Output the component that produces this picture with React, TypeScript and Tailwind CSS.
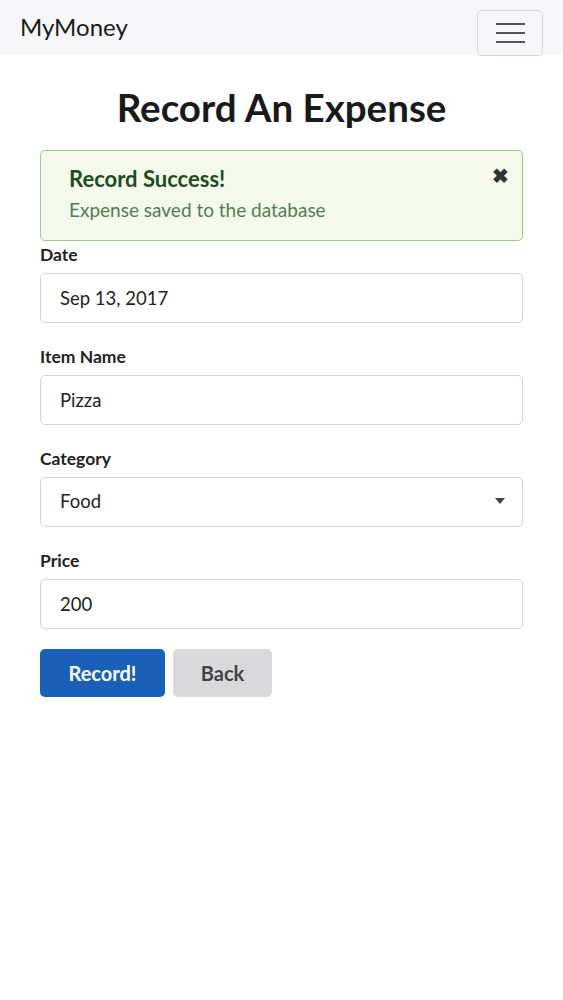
import React from 'react';

const Field: React.FC<{ label: string; children: React.ReactNode }> = ({ label, children }) => (
  <div className="mb-[22px]">
    <label className="block mb-[6px] text-[17.5px] leading-6 font-bold text-[#222]">{label}</label>
    {children}
  </div>
);

const inputCls =
  'w-full h-[50px] pl-[19px] pr-5 rounded-[5px] border border-[#d4d4d6] bg-white text-[18.5px] text-[#222] outline-none';

export default function App() {
  return (
    <div className="min-h-screen bg-white font-['Lato','Open_Sans',sans-serif]">
      {/* Navbar */}
      <nav className="relative h-[54px] bg-[#f6f5f8]">
        <div className="flex items-center h-full pl-5">
          <span className="text-[24px] text-[#1a1a1a] leading-none">MyMoney</span>
        </div>
        <button className="absolute right-[20px] top-[10px] w-[66px] h-[46px] rounded-[5px] border border-[#d8d7db] bg-[#f6f5f8] flex flex-col items-center justify-center gap-[7px]">
          <span className="block w-[29px] h-[2px] bg-[#555]" />
          <span className="block w-[29px] h-[2px] bg-[#555]" />
          <span className="block w-[29px] h-[2px] bg-[#555]" />
        </button>
      </nav>

      <main className="px-10">
        <h1 className="mt-[30px] mb-[20px] text-center text-[38.5px] leading-[46px] font-bold text-[#1a1a1a]">
          Record An Expense
        </h1>

        <div className="relative mb-[2px] h-[91px] rounded-[5px] border border-[#9fc78e] bg-[#f4f9eb] pl-7 pt-[14px]">
          <div className="text-[22px] leading-7 font-bold text-[#1d4d1d]">Record Success!</div>
          <div className="mt-[5px] text-[19px] leading-6 text-[#557a58]">Expense saved to the database</div>
          <span className="absolute right-[13px] top-[12px] text-[20px] leading-6 font-bold text-[#333]">✖</span>
        </div>

        <Field label="Date">
          <input className={inputCls} defaultValue="Sep 13, 2017" />
        </Field>
        <Field label="Item Name">
          <input className={inputCls} defaultValue="Pizza" />
        </Field>
        <Field label="Category">
          <div className="relative">
            <div className={inputCls + ' flex items-center'}>Food</div>
            <span className="absolute right-[18px] top-[21px] w-0 h-0 border-l-[5px] border-r-[5px] border-t-[6px] border-l-transparent border-r-transparent border-t-[#444]" />
          </div>
        </Field>
        <div className="mb-5">
          <label className="block mb-[6px] text-[17.5px] leading-6 font-bold text-[#222]">Price</label>
          <input className={inputCls} defaultValue="200" />
        </div>

        <div className="flex gap-2">
          <button className="w-[125px] h-[48px] rounded-[5px] bg-[#1a60b8] text-white text-[20px] font-bold">Record!</button>
          <button className="w-[99px] h-[48px] rounded-[5px] bg-[#d9d9dc] text-[#444] text-[20px] font-bold">Back</button>
        </div>
      </main>
    </div>
  );
}
